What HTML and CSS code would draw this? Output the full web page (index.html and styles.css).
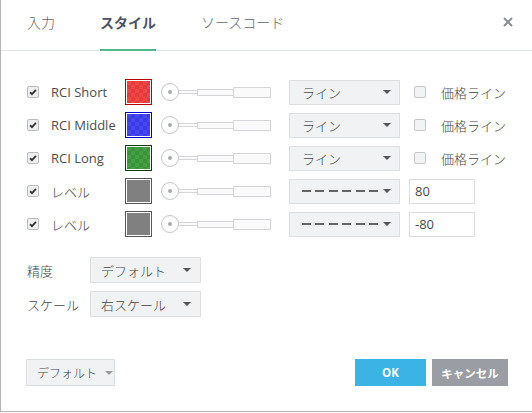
FILE: index.html
```html
<!DOCTYPE html>
<html lang="ja">
<head>
<meta charset="utf-8">
<link rel="stylesheet" href="styles.css">
</head>
<body>
<div class="dialog">
  <div class="header">
    <div class="tab">入力</div>
    <div class="tab active">スタイル</div>
    <div class="tab">ソースコード</div>
    <div class="close">
      <svg width="10" height="10" viewBox="0 0 10 10"><path d="M1 1L9 9M9 1L1 9" stroke="#8a8e96" stroke-width="2" fill="none"/></svg>
    </div>
  </div>

  <div class="content">
    <div class="row">
      <span class="cb checked"><svg viewBox="0 0 12 12"><path d="M2.5 6.3L4.8 8.6L9.5 3.5" stroke="#333" stroke-width="2.2" fill="none"/></svg></span>
      <span class="label">RCI Short</span>
      <span class="swatch red"><span class="fill"></span></span>
      <span class="slider"><span class="knob"></span><span class="t1"></span><span class="t2"></span><span class="t3"></span></span>
      <span class="select">ライン<span class="arrow"></span></span>
      <span class="cb off"></span>
      <span class="label2">価格ライン</span>
    </div>
    <div class="row">
      <span class="cb checked"><svg viewBox="0 0 12 12"><path d="M2.5 6.3L4.8 8.6L9.5 3.5" stroke="#333" stroke-width="2.2" fill="none"/></svg></span>
      <span class="label">RCI Middle</span>
      <span class="swatch blue"><span class="fill"></span></span>
      <span class="slider"><span class="knob"></span><span class="t1"></span><span class="t2"></span><span class="t3"></span></span>
      <span class="select">ライン<span class="arrow"></span></span>
      <span class="cb off"></span>
      <span class="label2">価格ライン</span>
    </div>
    <div class="row">
      <span class="cb checked"><svg viewBox="0 0 12 12"><path d="M2.5 6.3L4.8 8.6L9.5 3.5" stroke="#333" stroke-width="2.2" fill="none"/></svg></span>
      <span class="label">RCI Long</span>
      <span class="swatch green"><span class="fill"></span></span>
      <span class="slider"><span class="knob"></span><span class="t1"></span><span class="t2"></span><span class="t3"></span></span>
      <span class="select">ライン<span class="arrow"></span></span>
      <span class="cb off"></span>
      <span class="label2">価格ライン</span>
    </div>
    <div class="row">
      <span class="cb checked"><svg viewBox="0 0 12 12"><path d="M2.5 6.3L4.8 8.6L9.5 3.5" stroke="#333" stroke-width="2.2" fill="none"/></svg></span>
      <span class="label jp">レベル</span>
      <span class="swatch gray"><span class="fill"></span></span>
      <span class="slider"><span class="knob"></span><span class="t1"></span><span class="t2"></span><span class="t3"></span></span>
      <span class="select"><span class="dashes"></span><span class="arrow"></span></span>
      <span class="input">80</span>
    </div>
    <div class="row">
      <span class="cb checked"><svg viewBox="0 0 12 12"><path d="M2.5 6.3L4.8 8.6L9.5 3.5" stroke="#333" stroke-width="2.2" fill="none"/></svg></span>
      <span class="label jp">レベル</span>
      <span class="swatch gray"><span class="fill"></span></span>
      <span class="slider"><span class="knob"></span><span class="t1"></span><span class="t2"></span><span class="t3"></span></span>
      <span class="select"><span class="dashes"></span><span class="arrow"></span></span>
      <span class="input">-80</span>
    </div>

    <div class="opts">
      <div class="opt">
        <span class="optlabel">精度</span>
        <span class="select sm">デフォルト<span class="arrow"></span></span>
      </div>
      <div class="opt">
        <span class="optlabel">スケール</span>
        <span class="select sm">右スケール<span class="arrow"></span></span>
      </div>
    </div>
  </div>

  <div class="footer">
    <span class="btn-default">デフォルト<span class="arrow light"></span></span>
    <span class="spacer"></span>
    <span class="btn ok">OK</span>
    <span class="btn cancel">キャンセル</span>
  </div>
</div>
</body>
</html>
```

FILE: styles.css
```css
* { box-sizing: border-box; }
html, body { margin: 0; padding: 0; background: #fff; }
body {
  font-family: "Open Sans", "Noto Sans CJK JP", sans-serif;
  font-size: 13px;
  color: #4a4a4a;
}
.dialog {
  width: 532px;
  height: 412px;
  border-left: 1px solid #b4b4b4;
  border-bottom: 1px solid #b4b4b4;
  display: flex;
  flex-direction: column;
  background: #fff;
}
.header {
  height: 51px;
  border-bottom: 1px solid #e0e3e8;
  display: flex;
  align-items: stretch;
  padding-left: 26px;
  padding-right: 19px;
}
.tab {
  font-family: "Noto Sans CJK JP", sans-serif;
  font-size: 14px;
  font-weight: 300;
  color: #5f646d;
  display: flex;
  align-items: center;
  padding-bottom: 6px;
  margin-right: 45px;
  border-bottom: 2px solid transparent;
  margin-bottom: -1px;
}
.tab.active {
  font-weight: bold;
  color: #4c525e;
  border-bottom-color: #53b987;
}
.close {
  margin-left: auto;
  display: flex;
  align-items: center;
  padding-bottom: 6px;
}
.close svg { display: block; }

.content {
  padding-left: 26px;
  padding-top: 28px;
}
.row {
  display: flex;
  align-items: center;
  height: 26px;
  margin-bottom: 7px;
}
.cb {
  width: 12px;
  height: 12px;
  border: 1px solid #b9bbbf;
  border-radius: 2px;
  background: #eeeff1;
  display: inline-block;
  flex: none;
}
.cb svg { display: block; width: 10px; height: 10px; }
.cb.off { margin-left: 14px; background: #f2f3f5; border-color: #c4c6ca; }
.label {
  width: 86px;
  padding-left: 12px;
  font-size: 13px;
  color: #4d4d4d;
  white-space: nowrap;
}
.label.jp { font-family: "Noto Sans CJK JP", sans-serif; font-weight: 300; color: #444; }
.swatch {
  width: 27px;
  height: 26px;
  border: 1px solid;
  padding: 1px;
  background: #fff;
  flex: none;
}
.swatch .fill { display: block; width: 100%; height: 100%; }
.swatch.red { border-color: #b80000; }
.swatch.red .fill {
  background-color: #f24646;
  background-image: linear-gradient(45deg, #e33b3b 25%, transparent 25%, transparent 75%, #e33b3b 75%), linear-gradient(45deg, #e33b3b 25%, transparent 25%, transparent 75%, #e33b3b 75%);
  background-size: 8px 8px;
  background-position: 0 0, 4px 4px;
}
.swatch.blue { border-color: #0000c8; }
.swatch.blue .fill {
  background-color: #4646f2;
  background-image: linear-gradient(45deg, #3b3be3 25%, transparent 25%, transparent 75%, #3b3be3 75%), linear-gradient(45deg, #3b3be3 25%, transparent 25%, transparent 75%, #3b3be3 75%);
  background-size: 8px 8px;
  background-position: 0 0, 4px 4px;
}
.swatch.green { border-color: #0b3d0b; }
.swatch.green .fill {
  background-color: #44a044;
  background-image: linear-gradient(45deg, #3a923a 25%, transparent 25%, transparent 75%, #3a923a 75%), linear-gradient(45deg, #3a923a 25%, transparent 25%, transparent 75%, #3a923a 75%);
  background-size: 8px 8px;
  background-position: 0 0, 4px 4px;
}
.swatch.gray { border-color: #555; }
.swatch.gray .fill { background: #808080; }

.slider {
  display: flex;
  align-items: center;
  margin-left: 9px;
  width: 110px;
  flex: none;
}
.knob {
  width: 18px;
  height: 18px;
  border: 1px solid #c2c5cb;
  border-radius: 50%;
  background: #fff;
  position: relative;
  flex: none;
  z-index: 1;
}
.knob::after {
  content: "";
  position: absolute;
  left: 6px; top: 6px;
  width: 4px; height: 4px;
  border-radius: 50%;
  background: #a7abb2;
}
.t1, .t2, .t3 {
  background: #fafafa;
  border: 1px solid #d3d5d9;
  flex: none;
}
.t1 { width: 20px; height: 4px; margin-left: -1px; }
.t2 { width: 37px; height: 7px; margin-left: -1px; }
.t3 { width: 38px; height: 11px; margin-left: -1px; }

.select {
  margin-left: 18px;
  width: 111px;
  height: 25px;
  background: #f1f2f4;
  border: 1px solid #dcdee2;
  display: flex;
  align-items: center;
  padding-left: 12px;
  padding-right: 8px;
  font-family: "Noto Sans CJK JP", sans-serif;
  font-weight: 300;
  font-size: 13px;
  color: #444;
  flex: none;
}
.arrow {
  margin-left: auto;
  width: 0; height: 0;
  border-left: 4px solid transparent;
  border-right: 4px solid transparent;
  border-top: 4px solid #555;
}
.arrow.light { border-top-color: #9a9a9a; margin-left: 8px; }
.dashes {
  display: block;
  width: 76px;
  height: 2px;
  background: repeating-linear-gradient(90deg, #666 0 9px, transparent 9px 13.4px);
}
.label2 {
  margin-left: 15px;
  font-family: "Noto Sans CJK JP", sans-serif;
  font-weight: 300;
  font-size: 13px;
  color: #444;
}
.input {
  margin-left: 9px;
  width: 66px;
  height: 25px;
  border: 1px solid #dcdee2;
  background: #fff;
  display: flex;
  align-items: center;
  padding-left: 5px;
  font-family: "Open Sans", sans-serif;
  font-size: 13px;
  color: #4a4a4a;
}

.opts { padding-top: 13px; }
.opt {
  display: flex;
  align-items: center;
  height: 26px;
  margin-bottom: 8px;
}
.optlabel {
  width: 63px;
  font-family: "Noto Sans CJK JP", sans-serif;
  font-weight: 300;
  font-size: 13px;
  color: #444;
}
.select.sm { margin-left: 0; height: 26px; padding-left: 10px; padding-right: 9px; }

.footer {
  margin-top: auto;
  display: flex;
  align-items: center;
  padding-left: 25px;
  padding-right: 24px;
  padding-bottom: 25px;
}
.btn-default {
  height: 27px;
  width: 89px;
  background: #f1f2f4;
  border: 1px solid #d9dce1;
  display: flex;
  align-items: center;
  padding-left: 10px;
  font-family: "Noto Sans CJK JP", sans-serif;
  font-weight: 300;
  font-size: 12px;
  color: #444;
}
.spacer { flex: 1; }
.btn {
  height: 27px;
  display: flex;
  align-items: center;
  justify-content: center;
  color: #fff;
  font-weight: bold;
  font-family: "Open Sans", "Noto Sans CJK JP", sans-serif;
  font-size: 11.5px;
}
.btn.ok { width: 71px; background: #3bb3e4; }
.btn.cancel { width: 76px; margin-left: 6px; background: #9b9da4; }
```
